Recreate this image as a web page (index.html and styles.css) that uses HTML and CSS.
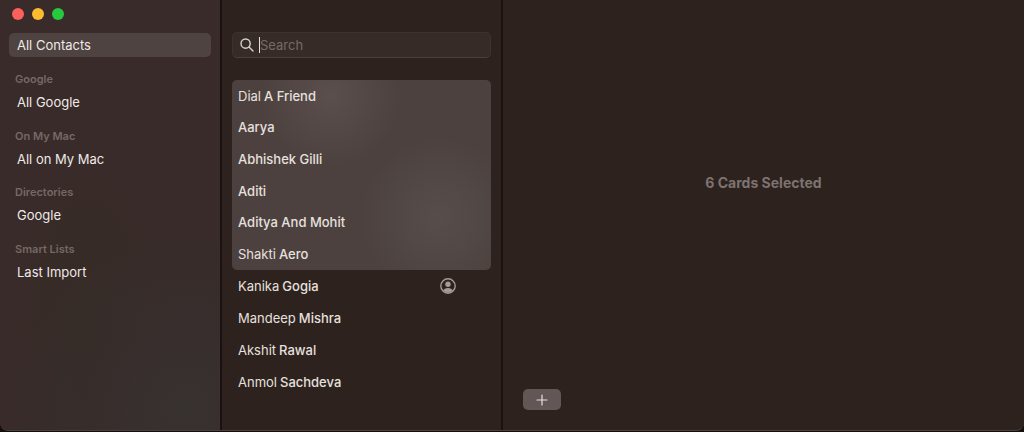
FILE: index.html
```html
<!DOCTYPE html>
<html lang="en">
<head>
  <meta charset="UTF-8">
  <meta name="viewport" content="width=device-width, initial-scale=1">
  <title>Contacts</title>
  <link rel="stylesheet" href="styles.css">
</head>
<body>
  <div class="window">
    <aside class="sidebar">
      <div class="traffic-lights">
        <button class="light close" aria-label="Close"></button>
        <button class="light minimize" aria-label="Minimize"></button>
        <button class="light zoom" aria-label="Zoom"></button>
      </div>
      <nav>
        <a class="group-link active" href="#all">All Contacts</a>
        <div class="groups">
          <section>
            <h2>Google</h2>
            <a class="group-link" href="#google">All Google</a>
          </section>
          <section>
            <h2>On My Mac</h2>
            <a class="group-link" href="#mac">All on My Mac</a>
          </section>
          <section>
            <h2>Directories</h2>
            <a class="group-link" href="#directory">Google</a>
          </section>
          <section>
            <h2>Smart Lists</h2>
            <a class="group-link" href="#import">Last Import</a>
          </section>
        </div>
      </nav>
    </aside>

    <section class="contacts">
      <label class="search">
        <svg width="14" height="14" viewBox="0 0 14 14" fill="none" stroke="#d8d2d0" stroke-width="1.4" stroke-linecap="round" aria-hidden="true">
          <circle cx="5.6" cy="5.6" r="4.6"/>
          <path d="M9 9l4 4"/>
        </svg>
        <span class="caret"></span>
        <input type="text" placeholder="Search" aria-label="Search">
      </label>

      <ul class="list selected">
        <li>Dial <b>A Friend</b></li>
        <li><b>Aarya</b></li>
        <li><b>Abhishek Gilli</b></li>
        <li><b>Aditi</b></li>
        <li><b>Aditya And Mohit</b></li>
        <li>Shakti <b>Aero</b></li>
      </ul>
      <ul class="list">
        <li>
          Kanika <b>Gogia</b>
          <svg class="me" width="16" height="16" viewBox="0 0 16 16" role="img" aria-label="My card">
            <circle cx="8" cy="8" r="7.2" fill="none" stroke="#a39b98" stroke-width="1.4"/>
            <circle cx="8" cy="6.3" r="2.7" fill="#a39b98"/>
            <path d="M3.2 12.6c.6-1.9 2.500-2.700 4.800-2.700s4.200.8 4.800 2.700a6.700 6.700 0 0 1-9.600 0z" fill="#a39b98"/>
          </svg>
        </li>
        <li>Mandeep <b>Mishra</b></li>
        <li>Akshit <b>Rawal</b></li>
        <li>Anmol <b>Sachdeva</b></li>
      </ul>
    </section>

    <main class="detail">
      <p>6 Cards Selected</p>
      <button class="add" aria-label="Add">
        <svg width="12" height="12" viewBox="0 0 12 12" stroke="#e6e0df" stroke-width="1.2" stroke-linecap="round" aria-hidden="true">
          <path d="M6 1v10M1 6h10"/>
        </svg>
      </button>
    </main>
  </div>
</body>
</html>
```

FILE: styles.css
```css
* {
  box-sizing: border-box;
}

body {
  margin: 0;
  min-height: 100vh;
  display: flex;
  padding-bottom: 1px;
  background: #140f0e;
  color: #e6e0de;
  font: 400 13px/16px Inter, sans-serif;
}

h2, p, ul {
  margin: 0;
  padding: 0;
}

button {
  border: none;
  padding: 0;
}

.window {
  flex: 1;
  display: grid;
  grid-template-columns: 222px 281px 1fr;
  background: #2d221e;
  border-bottom: 1px solid #4a413e;
  border-radius: 0 0 8px 8px;
  overflow: hidden;
}

/* sidebar */
.sidebar {
  padding: 8px 9px 0 9px;
  border-right: 2px solid #1a1110;
  background:
    radial-gradient(circle at 85% 95%, #373130, transparent 40%),
    radial-gradient(ellipse at 40% 78%, #362b26, transparent 40%),
    #382b29;
}

.traffic-lights {
  display: flex;
  gap: 8px;
  padding-left: 3px;
  margin-bottom: 13px;
}

.light {
  width: 12px;
  height: 12px;
  border-radius: 50%;
}

.close { background: #fc605c; }
.minimize { background: #fdbc2f; }
.zoom { background: #27c840; }

.group-link {
  display: block;
  padding: 4px 8px;
  border-radius: 5px;
  color: #efe9e7;
  text-decoration: none;
}

.group-link.active {
  background: #4e4341;
}

.groups {
  display: grid;
  grid-auto-rows: 1fr;
  height: 226px;
  margin-top: 14px;
}

.groups h2 {
  padding-left: 6px;
  margin-bottom: 3px;
  color: #746966;
  font-size: 11px;
  font-weight: 600;
  line-height: 16px;
}

/* contact list */
.contacts {
  padding: 32px 10px 32px 10px;
  border-right: 2px solid #1a1110;
}

.search {
  display: flex;
  align-items: center;
  height: 26px;
  padding: 0 7px;
  margin-bottom: 22px;
  background: #372b27;
  border: 1px solid #3d322e;
  border-bottom-color: #4a3f3b;
  border-radius: 5px;
}

.caret {
  width: 1px;
  height: 16px;
  margin-left: 5px;
  background: #e6e0df;
}

.search input {
  flex: 1;
  min-width: 0;
  padding: 0;
  border: none;
  outline: none;
  background: none;
  color: #e6e0df;
  font: 400 13px/16px Inter, sans-serif;
}

.search input::placeholder {
  color: #756b68;
}

.list {
  display: grid;
  grid-auto-rows: 32px;
  list-style: none;
}

.list.selected {
  height: 190px;
  grid-auto-rows: 1fr;
  border-radius: 5px;
  background:
    radial-gradient(circle at 38% 8%, #5a4f4d, transparent 30%),
    radial-gradient(circle at 80% 72%, #574e4c, transparent 32%),
    #4c413e;
}

.list li {
  display: flex;
  align-items: center;
  gap: 3px;
  padding: 0 35px 0 6px;
}

.list b {
  font-weight: 500;
}

.me {
  margin-left: auto;
}

/* detail pane */
.detail {
  display: flex;
  flex-direction: column;
  justify-content: space-between;
  align-items: flex-start;
  padding: 174px 20px 20px;
}

.detail p {
  align-self: center;
  color: #7d7370;
  font-size: 14px;
  font-weight: 700;
  line-height: 18px;
}

.add {
  display: grid;
  place-items: center;
  width: 38px;
  height: 21px;
  border-radius: 5px;
  background: #625755;
}
```
